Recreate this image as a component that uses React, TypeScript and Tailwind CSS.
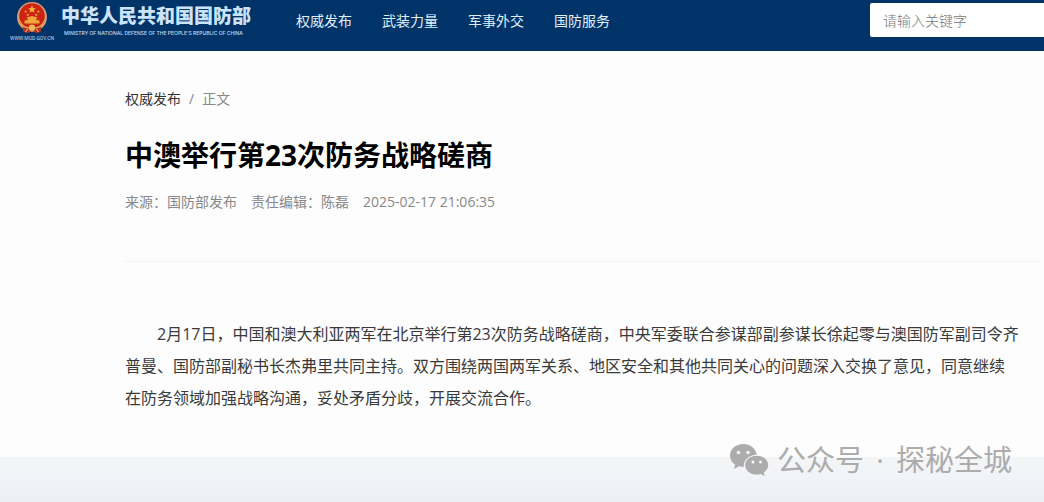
const navItems = ["权威发布", "武装力量", "军事外交", "国防服务"];

const Emblem = () => {
  return (
    <svg className="w-8 h-8" viewBox="1 0 30 30" aria-hidden="true">
      <circle cx="16" cy="15" r="14" fill="#d9a07a" />
      <circle cx="16" cy="14" r="12" fill="#cb2413" />
      <path
        fill="#f5b83e"
        d="m16 4 1 2.700h2.800l-2.200 1.700.8 2.700-2.400-1.600-2.400 1.600.8-2.700-2.200-1.700H15z"
      />
      <g fill="#f0a83c">
        <circle cx="10" cy="10" r="1" />
        <circle cx="12" cy="13" r="1" />
        <circle cx="20" cy="13" r="1" />
        <circle cx="22" cy="10" r="1" />
        <path d="M11 15.500 16 14l5 1.500v1h-1V18h3v3H9v-3h3v-1.500h-1z" />
      </g>
      <path
        d="M4 19c2 5 6 7 12 7s10-2 12-7"
        fill="none"
        stroke="#e0a050"
        strokeWidth="2"
      />
      <path d="M7 24c3 2 6 2 9 1 3 1 6 1 9-1l-1 5-4 1-4-2-4 2-4-1z" fill="#b83220" />
      <circle cx="16" cy="25" r="3" fill="#efb65a" />
      <path d="m10 29 2-3m10 3-2-3" stroke="#e8a860" />
    </svg>
  );
};

const Header = () => {
  return (
    <header className="flex items-start h-[51px] pl-[11px] bg-[#003468] text-white">
      <a href="#" className="flex shrink-0">
        <span className="flex flex-col items-center w-[42px] pt-px">
          <Emblem />
          <span className="font-['Roboto',sans-serif] text-[5px] leading-[8px] mt-px text-[#c5dcf0] whitespace-nowrap">
            WWW.MOD.GOV.CN
          </span>
        </span>
        <span className="flex flex-col ml-2 pt-1 whitespace-nowrap">
          <span className="text-[19px] leading-6 font-black text-[#cbe3fb]">
            中华人民共和国国防部
          </span>
          <span className="font-['Inter',sans-serif] font-medium text-[5px] leading-[8px] ml-[3px] mt-px text-[#c5dcf0]">
            MINISTRY OF NATIONAL DEFENSE OF THE PEOPLE'S REPUBLIC OF CHINA
          </span>
        </span>
      </a>
      <nav className="flex gap-[30px] ml-[45px] pt-[11px] text-sm text-[#e0f0fa] whitespace-nowrap">
        {navItems.map((item) => (
          <a key={item} href="#">
            {item}
          </a>
        ))}
      </nav>
      <input
        type="search"
        aria-label="请输入关键字"
        placeholder="请输入关键字"
        className="w-[174px] h-[34px] ml-auto mt-[3px] pl-[13px] bg-white rounded-l-xs text-sm text-gray-700 placeholder:text-[#777777] placeholder:font-light"
      />
    </header>
  );
};

const Article = () => {
  return (
    <main className="pl-[125px] pr-6 pt-[38px] pb-[43px] bg-[#fdfdfd]">
      <nav className="flex gap-2 text-sm text-[#888888]">
        <a href="#" className="text-[#333333]">
          权威发布
        </a>
        <span>/</span>
        <span>正文</span>
      </nav>
      <h1 className="mt-[26px] text-[28px] leading-10 font-bold text-black">
        中澳举行第23次防务战略磋商
      </h1>
      <div className="flex gap-[14px] mt-[17px] text-sm text-[#888888]">
        <span>来源：国防部发布</span>
        <span>责任编辑：陈磊</span>
        <time>2025-02-17 21:06:35</time>
      </div>
      <hr className="mt-[49px] -mr-5 border-[#f3f3f3]" />
      <p className="mt-14 indent-8 text-base leading-8 text-[#3a3a3a]">
        2月17日，中国和澳大利亚两军在北京举行第23次防务战略磋商，中央军委联合参谋部副参谋长徐起零与澳国防军副司令齐普曼、国防部副秘书长杰弗里共同主持。双方围绕两国两军关系、地区安全和其他共同关心的问题深入交换了意见，同意继续在防务领域加强战略沟通，妥处矛盾分歧，开展交流合作。
      </p>
    </main>
  );
};

const Watermark = () => {
  return (
    <div className="absolute right-8 bottom-[26px] flex items-center gap-2 text-[#acacac]">
      <svg className="w-10 h-8" viewBox="0 0 40 32" fill="currentColor" aria-hidden="true">
        <path d="M14.500 0C6.800 0 1 5 1 11.700c0 3.700 1.900 6.800 5.100 8.900L5 25l5-2.700c1.600.4 3 .6 4.700.6-.3-7 5.600-12.200 13.100-12.200C26.700 4.500 21.200 0 14.500 0z" />
        <path d="M27.800 11.800c-6.500 0-11.600 4.100-11.600 9.400s5.100 9.400 11.600 9.400c1.300 0 2.700-.2 3.900-.6l4 2-.9-3.600c2.700-1.700 4.400-4.200 4.400-7.200 0-5.300-5-9.400-11.400-9.400z" />
        <g fill="#f8f9fa">
          <circle cx="9.500" cy="8.500" r="1.800" />
          <circle cx="19" cy="8.500" r="1.800" />
          <circle cx="24" cy="18" r="1.500" />
          <circle cx="31.500" cy="18" r="1.500" />
        </g>
      </svg>
      <span className="flex text-[29px] leading-8 whitespace-nowrap">
        <span>公众号</span>
        <span className="w-8 text-center">·</span>
        <span>探秘全城</span>
      </span>
    </div>
  );
};

export const ArticlePage = () => {
  return (
    <div className="relative flex flex-col min-h-screen overflow-hidden font-['Open_Sans','Noto_Sans_CJK_SC',sans-serif]">
      <Header />
      <Article />
      <footer className="grow bg-gradient-to-b from-[#f4f5f6] via-[#f0f3f8] to-[#ecf0f6]" />
      <Watermark />
    </div>
  );
};

export default ArticlePage;
